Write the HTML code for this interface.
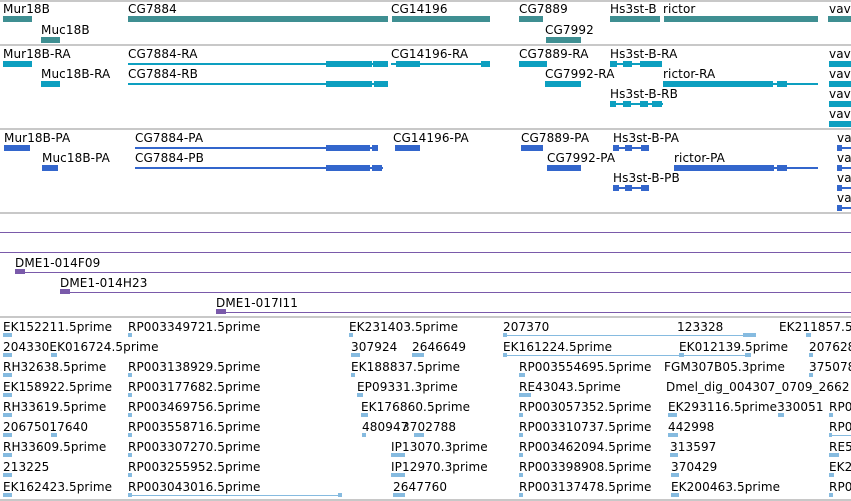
<!DOCTYPE html>
<html><head><meta charset="utf-8"><style>
body{margin:0;width:851px;height:501px;overflow:hidden;background:#fff;position:relative;font-family:"DejaVu Sans","Liberation Sans",sans-serif}
.t{position:absolute;font-size:12px;line-height:14px;white-space:nowrap;color:#000;margin-top:1px;letter-spacing:0.1px}
.h{position:absolute;left:0;width:851px;height:2px;background:#c8c8c8}
.p{position:absolute;height:1px;background:#7a5aaa}
.g,.r,.q,.e,.v{position:absolute}
.g{background:#3f8f92;height:6px}
.r{background:#0d9fc0}
.q{background:#3366cc}
.e{background:#86bbe0}
.v{background:#7a5aaa}
</style></head><body>
<div class="h" style="top:0"></div>
<div class="h" style="top:44px"></div>
<div class="h" style="top:128px"></div>
<div class="h" style="top:212px"></div>
<div class="h" style="top:316px"></div>
<div class="h" style="top:499px"></div>

<div class="t" style="left:3px;top:1px">Mur18B</div><div class="g" style="left:3px;top:16px;width:29px"></div>
<div class="t" style="left:128px;top:1px">CG7884</div><div class="g" style="left:128px;top:16px;width:260px"></div>
<div class="t" style="left:391px;top:1px">CG14196</div><div class="g" style="left:392px;top:16px;width:98px"></div>
<div class="t" style="left:519px;top:1px">CG7889</div><div class="g" style="left:519px;top:16px;width:24px"></div>
<div class="t" style="left:610px;top:1px">Hs3st-B</div><div class="g" style="left:610px;top:16px;width:50px"></div>
<div class="t" style="left:663px;top:1px">rictor</div><div class="g" style="left:664px;top:16px;width:154px"></div>
<div class="t" style="left:829px;top:1px">vav</div><div class="g" style="left:828px;top:16px;width:23px"></div>
<div class="t" style="left:41px;top:22px">Muc18B</div><div class="g" style="left:41px;top:37px;width:19px"></div>
<div class="t" style="left:545px;top:22px">CG7992</div><div class="g" style="left:546px;top:37px;width:35px"></div>

<div class="t" style="left:3px;top:46px">Mur18B-RA</div><div class="r" style="left:3px;top:61px;width:29px;height:6px"></div>
<div class="t" style="left:128px;top:46px">CG7884-RA</div><div class="r" style="left:128px;top:63px;width:260px;height:2px"></div><div class="r" style="left:326px;top:61px;width:46px;height:6px"></div><div class="r" style="left:373px;top:61px;width:15px;height:6px"></div>
<div class="t" style="left:391px;top:46px">CG14196-RA</div><div class="r" style="left:391px;top:63px;width:99px;height:2px"></div><div class="r" style="left:396px;top:61px;width:24px;height:6px"></div><div class="r" style="left:481px;top:61px;width:9px;height:6px"></div>
<div class="t" style="left:519px;top:46px">CG7889-RA</div><div class="r" style="left:519px;top:61px;width:28px;height:6px"></div>
<div class="t" style="left:610px;top:46px">Hs3st-B-RA</div><div class="r" style="left:610px;top:63px;width:52px;height:2px"></div><div class="r" style="left:610px;top:61px;width:7px;height:6px"></div><div class="r" style="left:623px;top:61px;width:9px;height:6px"></div><div class="r" style="left:640px;top:61px;width:22px;height:6px"></div>
<div class="t" style="left:829px;top:46px">vav-RA</div><div class="r" style="left:829px;top:61px;width:22px;height:6px"></div>
<div class="t" style="left:41px;top:66px">Muc18B-RA</div><div class="r" style="left:41px;top:81px;width:19px;height:6px"></div>
<div class="t" style="left:128px;top:66px">CG7884-RB</div><div class="r" style="left:128px;top:83px;width:260px;height:2px"></div><div class="r" style="left:326px;top:81px;width:46px;height:6px"></div><div class="r" style="left:374px;top:81px;width:14px;height:6px"></div>
<div class="t" style="left:545px;top:66px">CG7992-RA</div><div class="r" style="left:545px;top:81px;width:36px;height:6px"></div>
<div class="t" style="left:663px;top:66px">rictor-RA</div><div class="r" style="left:663px;top:83px;width:155px;height:2px"></div><div class="r" style="left:663px;top:81px;width:110px;height:6px"></div><div class="r" style="left:777px;top:81px;width:10px;height:6px"></div>
<div class="t" style="left:829px;top:66px">vav-RB</div><div class="r" style="left:829px;top:81px;width:22px;height:6px"></div>
<div class="t" style="left:610px;top:86px">Hs3st-B-RB</div><div class="r" style="left:610px;top:103px;width:53px;height:2px"></div><div class="r" style="left:610px;top:101px;width:6px;height:6px"></div><div class="r" style="left:623px;top:101px;width:8px;height:6px"></div><div class="r" style="left:640px;top:101px;width:8px;height:6px"></div><div class="r" style="left:652px;top:101px;width:10px;height:6px"></div>
<div class="t" style="left:829px;top:86px">vav-RC</div><div class="r" style="left:829px;top:101px;width:22px;height:6px"></div>
<div class="t" style="left:829px;top:106px">vav-RD</div><div class="r" style="left:829px;top:121px;width:22px;height:6px"></div>

<div class="t" style="left:4px;top:130px">Mur18B-PA</div><div class="q" style="left:4px;top:145px;width:26px;height:6px"></div>
<div class="t" style="left:135px;top:130px">CG7884-PA</div><div class="q" style="left:135px;top:147px;width:243px;height:2px"></div><div class="q" style="left:326px;top:145px;width:44px;height:6px"></div><div class="q" style="left:372px;top:145px;width:6px;height:6px"></div>
<div class="t" style="left:393px;top:130px">CG14196-PA</div><div class="q" style="left:395px;top:145px;width:25px;height:6px"></div>
<div class="t" style="left:521px;top:130px">CG7889-PA</div><div class="q" style="left:521px;top:145px;width:22px;height:6px"></div>
<div class="t" style="left:613px;top:130px">Hs3st-B-PA</div><div class="q" style="left:613px;top:147px;width:36px;height:2px"></div><div class="q" style="left:613px;top:145px;width:6px;height:6px"></div><div class="q" style="left:625px;top:145px;width:7px;height:6px"></div><div class="q" style="left:641px;top:145px;width:8px;height:6px"></div>
<div class="t" style="left:837px;top:130px">vav</div><div class="q" style="left:837px;top:147px;width:14px;height:2px"></div><div class="q" style="left:837px;top:145px;width:5px;height:6px"></div>
<div class="t" style="left:42px;top:150px">Muc18B-PA</div><div class="q" style="left:42px;top:165px;width:16px;height:6px"></div>
<div class="t" style="left:135px;top:150px">CG7884-PB</div><div class="q" style="left:135px;top:167px;width:248px;height:2px"></div><div class="q" style="left:326px;top:165px;width:44px;height:6px"></div><div class="q" style="left:372px;top:165px;width:10px;height:6px"></div>
<div class="t" style="left:547px;top:150px">CG7992-PA</div><div class="q" style="left:547px;top:165px;width:34px;height:6px"></div>
<div class="t" style="left:674px;top:150px">rictor-PA</div><div class="q" style="left:674px;top:167px;width:144px;height:2px"></div><div class="q" style="left:674px;top:165px;width:100px;height:6px"></div><div class="q" style="left:777px;top:165px;width:10px;height:6px"></div>
<div class="t" style="left:837px;top:150px">vav</div><div class="q" style="left:837px;top:167px;width:14px;height:2px"></div><div class="q" style="left:837px;top:165px;width:5px;height:6px"></div>
<div class="t" style="left:613px;top:170px">Hs3st-B-PB</div><div class="q" style="left:613px;top:187px;width:36px;height:2px"></div><div class="q" style="left:613px;top:185px;width:6px;height:6px"></div><div class="q" style="left:625px;top:185px;width:7px;height:6px"></div><div class="q" style="left:641px;top:185px;width:8px;height:6px"></div>
<div class="t" style="left:837px;top:170px">vav</div><div class="q" style="left:837px;top:187px;width:14px;height:2px"></div><div class="q" style="left:837px;top:185px;width:5px;height:6px"></div>
<div class="t" style="left:837px;top:190px">vav</div><div class="q" style="left:837px;top:207px;width:14px;height:2px"></div><div class="q" style="left:837px;top:205px;width:5px;height:6px"></div>

<div class="p" style="left:0;top:232px;width:851px"></div>
<div class="p" style="left:0;top:252px;width:851px"></div>
<div class="t" style="left:15px;top:255px">DME1-014F09</div><div class="p" style="left:15px;top:272px;width:836px"></div><div class="v" style="left:15px;top:269px;width:10px;height:5px"></div>
<div class="t" style="left:60px;top:275px">DME1-014H23</div><div class="p" style="left:60px;top:292px;width:791px"></div><div class="v" style="left:60px;top:289px;width:10px;height:5px"></div>
<div class="t" style="left:216px;top:295px">DME1-017I11</div><div class="p" style="left:216px;top:312px;width:635px"></div><div class="v" style="left:216px;top:309px;width:10px;height:5px"></div>

<div class="t" style="left:3px;top:319px">EK152211.5prime</div><div class="t" style="left:128px;top:319px">RP003349721.5prime</div><div class="t" style="left:349px;top:319px">EK231403.5prime</div><div class="t" style="left:503px;top:319px">207370</div><div class="t" style="left:677px;top:319px">123328</div><div class="t" style="left:779px;top:319px">EK211857.5</div>
<div class="t" style="left:3px;top:339px">204330EK016724.5prime</div><div class="t" style="left:351px;top:339px">307924</div><div class="t" style="left:412px;top:339px">2646649</div><div class="t" style="left:503px;top:339px">EK161224.5prime</div><div class="t" style="left:679px;top:339px">EK012139.5prime</div><div class="t" style="left:809px;top:339px">207628</div>
<div class="t" style="left:3px;top:359px">RH32638.5prime</div><div class="t" style="left:128px;top:359px">RP003138929.5prime</div><div class="t" style="left:351px;top:359px">EK188837.5prime</div><div class="t" style="left:519px;top:359px">RP003554695.5prime</div><div class="t" style="left:664px;top:359px">FGM307B05.3prime</div><div class="t" style="left:809px;top:359px">375078</div>
<div class="t" style="left:3px;top:379px">EK158922.5prime</div><div class="t" style="left:128px;top:379px">RP003177682.5prime</div><div class="t" style="left:357px;top:379px">EP09331.3prime</div><div class="t" style="left:519px;top:379px">RE43043.5prime</div><div class="t" style="left:666px;top:379px">Dmel_dig_004307_0709_2662</div>
<div class="t" style="left:3px;top:399px">RH33619.5prime</div><div class="t" style="left:128px;top:399px">RP003469756.5prime</div><div class="t" style="left:361px;top:399px">EK176860.5prime</div><div class="t" style="left:519px;top:399px">RP003057352.5prime</div><div class="t" style="left:668px;top:399px">EK293116.5prime330051</div><div class="t" style="left:829px;top:399px">RP0</div>
<div class="t" style="left:3px;top:419px">20675017640</div><div class="t" style="left:128px;top:419px">RP003558716.5prime</div><div class="t" style="left:362px;top:419px">480947</div><div class="t" style="left:402px;top:419px">3702788</div><div class="t" style="left:519px;top:419px">RP003310737.5prime</div><div class="t" style="left:668px;top:419px">442998</div><div class="t" style="left:829px;top:419px">RP0</div>
<div class="t" style="left:3px;top:439px">RH33609.5prime</div><div class="t" style="left:128px;top:439px">RP003307270.5prime</div><div class="t" style="left:391px;top:439px">IP13070.3prime</div><div class="t" style="left:519px;top:439px">RP003462094.5prime</div><div class="t" style="left:670px;top:439px">313597</div><div class="t" style="left:829px;top:439px">RE5</div>
<div class="t" style="left:3px;top:459px">213225</div><div class="t" style="left:128px;top:459px">RP003255952.5prime</div><div class="t" style="left:391px;top:459px">IP12970.3prime</div><div class="t" style="left:519px;top:459px">RP003398908.5prime</div><div class="t" style="left:671px;top:459px">370429</div><div class="t" style="left:829px;top:459px">EK2</div>
<div class="t" style="left:3px;top:479px">EK162423.5prime</div><div class="t" style="left:128px;top:479px">RP003043016.5prime</div><div class="t" style="left:393px;top:479px">2647760</div><div class="t" style="left:519px;top:479px">RP003137478.5prime</div><div class="t" style="left:671px;top:479px">EK200463.5prime</div><div class="t" style="left:829px;top:479px">RP0</div>

<div class="e" style="left:3px;top:333px;width:9px;height:4px"></div><div class="e" style="left:128px;top:333px;width:4px;height:4px"></div><div class="e" style="left:349px;top:333px;width:4px;height:4px"></div><div class="e" style="left:503px;top:335px;width:248px;height:1px"></div><div class="e" style="left:503px;top:333px;width:4px;height:4px"></div><div class="e" style="left:743px;top:333px;width:13px;height:4px"></div><div class="e" style="left:806px;top:333px;width:5px;height:4px"></div>
<div class="e" style="left:3px;top:353px;width:9px;height:4px"></div><div class="e" style="left:51px;top:353px;width:6px;height:4px"></div><div class="e" style="left:351px;top:353px;width:9px;height:4px"></div><div class="e" style="left:412px;top:353px;width:12px;height:4px"></div><div class="e" style="left:503px;top:355px;width:248px;height:1px"></div><div class="e" style="left:503px;top:353px;width:4px;height:4px"></div><div class="e" style="left:745px;top:353px;width:6px;height:4px"></div><div class="e" style="left:679px;top:353px;width:5px;height:4px"></div><div class="e" style="left:809px;top:353px;width:4px;height:4px"></div>
<div class="e" style="left:3px;top:373px;width:9px;height:4px"></div><div class="e" style="left:128px;top:373px;width:4px;height:4px"></div><div class="e" style="left:351px;top:373px;width:4px;height:4px"></div><div class="e" style="left:519px;top:373px;width:6px;height:4px"></div><div class="e" style="left:809px;top:373px;width:4px;height:4px"></div>
<div class="e" style="left:3px;top:393px;width:9px;height:4px"></div><div class="e" style="left:128px;top:393px;width:4px;height:4px"></div><div class="e" style="left:357px;top:393px;width:6px;height:4px"></div><div class="e" style="left:519px;top:393px;width:12px;height:4px"></div>
<div class="e" style="left:3px;top:413px;width:9px;height:4px"></div><div class="e" style="left:128px;top:413px;width:4px;height:4px"></div><div class="e" style="left:361px;top:413px;width:7px;height:4px"></div><div class="e" style="left:519px;top:413px;width:4px;height:4px"></div><div class="e" style="left:668px;top:413px;width:9px;height:4px"></div><div class="e" style="left:778px;top:413px;width:6px;height:4px"></div><div class="e" style="left:829px;top:413px;width:4px;height:4px"></div>
<div class="e" style="left:3px;top:433px;width:9px;height:4px"></div><div class="e" style="left:51px;top:433px;width:6px;height:4px"></div><div class="e" style="left:128px;top:433px;width:4px;height:4px"></div><div class="e" style="left:362px;top:433px;width:4px;height:4px"></div><div class="e" style="left:414px;top:433px;width:10px;height:4px"></div><div class="e" style="left:519px;top:433px;width:4px;height:4px"></div><div class="e" style="left:668px;top:433px;width:10px;height:4px"></div><div class="e" style="left:829px;top:435px;width:22px;height:1px"></div><div class="e" style="left:829px;top:433px;width:3px;height:4px"></div>
<div class="e" style="left:3px;top:453px;width:9px;height:4px"></div><div class="e" style="left:128px;top:453px;width:4px;height:4px"></div><div class="e" style="left:391px;top:453px;width:14px;height:4px"></div><div class="e" style="left:519px;top:453px;width:4px;height:4px"></div><div class="e" style="left:670px;top:453px;width:8px;height:4px"></div><div class="e" style="left:829px;top:453px;width:10px;height:4px"></div>
<div class="e" style="left:3px;top:473px;width:9px;height:4px"></div><div class="e" style="left:128px;top:473px;width:4px;height:4px"></div><div class="e" style="left:391px;top:473px;width:14px;height:4px"></div><div class="e" style="left:519px;top:473px;width:4px;height:4px"></div><div class="e" style="left:671px;top:473px;width:8px;height:4px"></div><div class="e" style="left:829px;top:473px;width:5px;height:4px"></div>
<div class="e" style="left:3px;top:493px;width:9px;height:4px"></div><div class="e" style="left:128px;top:495px;width:214px;height:1px"></div><div class="e" style="left:128px;top:493px;width:4px;height:4px"></div><div class="e" style="left:338px;top:493px;width:4px;height:4px"></div><div class="e" style="left:393px;top:493px;width:12px;height:4px"></div><div class="e" style="left:519px;top:493px;width:4px;height:4px"></div><div class="e" style="left:671px;top:493px;width:8px;height:4px"></div><div class="e" style="left:829px;top:493px;width:4px;height:4px"></div>
</body></html>
